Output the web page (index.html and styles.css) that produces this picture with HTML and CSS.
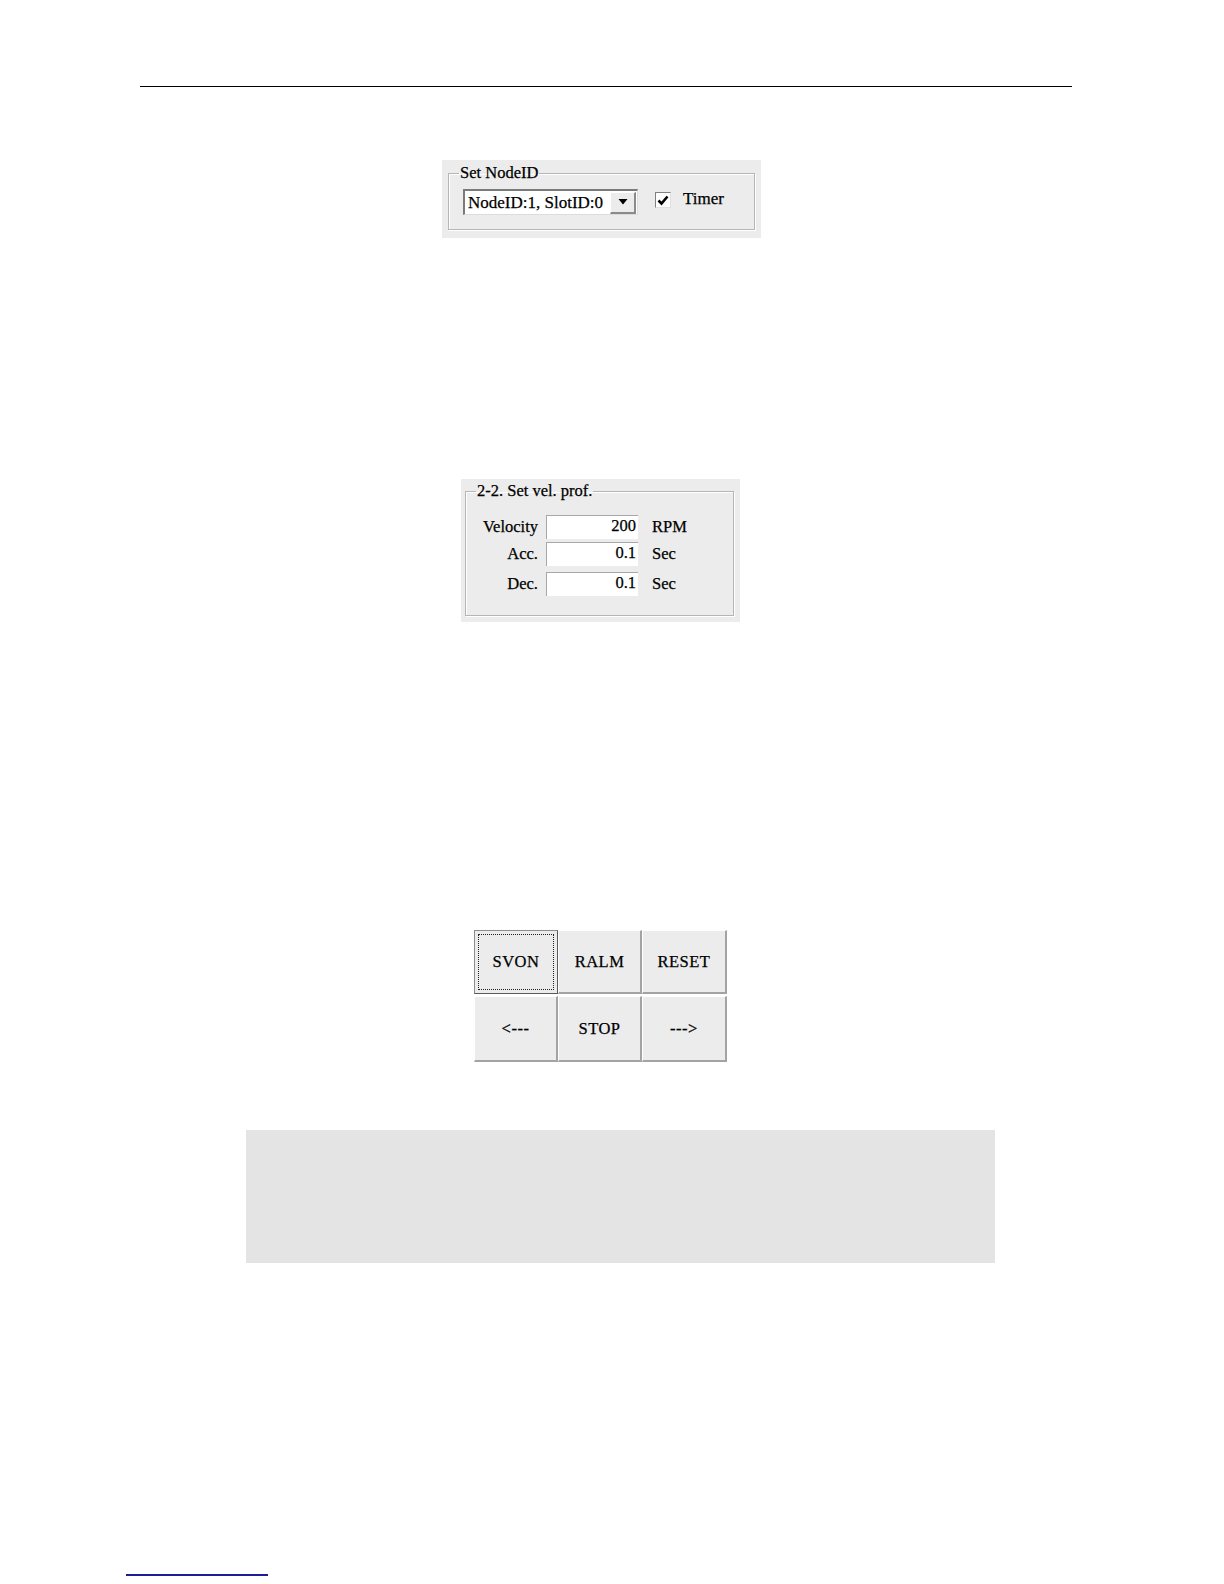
FILE: index.html
```html
<!DOCTYPE html>
<html>
<head>
<meta charset="utf-8">
<link rel="stylesheet" href="styles.css">
</head>
<body>
<div class="page">
  <div class="header-rule"></div>

  <div class="panel panel-node">
    <fieldset class="group group-node">
      <legend>Set NodeID</legend>
      <div class="node-row">
        <div class="combo">
          <span class="combo-text">NodeID:1, SlotID:0</span>
          <span class="combo-btn"><svg width="10" height="6" viewBox="0 0 10 6"><path d="M0.5 0 H9.5 L5 5.5 Z" fill="#000"/></svg></span>
        </div>
        <span class="check"><svg width="12" height="11" viewBox="0 0 12 11"><path d="M1.5 5.5 L4.5 8.5 L10.5 1.5" fill="none" stroke="#000" stroke-width="2.6"/></svg></span>
        <span class="check-label">Timer</span>
      </div>
    </fieldset>
  </div>

  <div class="panel panel-vel">
    <fieldset class="group group-vel">
      <legend>2-2. Set vel. prof.</legend>
      <div class="vel-grid">
        <span class="lbl">Velocity</span><span class="field">200</span><span class="unit">RPM</span>
        <span class="lbl">Acc.</span><span class="field">0.1</span><span class="unit">Sec</span>
        <span class="lbl lbl-dec">Dec.</span><span class="field field-dec">0.1</span><span class="unit unit-dec">Sec</span>
      </div>
    </fieldset>
  </div>

  <div class="btn-grid">
    <div class="btn btn-focus"><span class="focus-ring">SVON</span></div>
    <div class="btn">RALM</div>
    <div class="btn">RESET</div>
    <div class="btn">&lt;---</div>
    <div class="btn">STOP</div>
    <div class="btn">---&gt;</div>
  </div>

  <div class="gray-box"></div>

  <div class="footer-rule"></div>
</div>
</body>
</html>
```

FILE: styles.css
```css
html, body {
  margin: 0;
  padding: 0;
  background: #ffffff;
}
body {
  font-family: "Liberation Serif", "Times New Roman", serif;
  color: #000;
}
.page {
  width: 1224px;
  height: 1584px;
  overflow: hidden;
  display: flex;
  flex-direction: column;
}
.header-rule {
  margin-left: 140px;
  width: 932px;
  height: 86px;
  border-bottom: 1px solid #000;
  flex: none;
}

.panel {
  background: #ececec;
  box-sizing: border-box;
  flex: none;
  -webkit-text-stroke: 0.25px #000;
}
.group {
  margin: 0;
  padding: 0;
  border: 1px solid #b5b5b5;
  box-shadow: 1px 1px 0 #ffffff, inset 1px 1px 0 #ffffff;
  box-sizing: border-box;
}
.group legend {
  font-size: 16.5px;
  line-height: 18px;
  padding: 0 1px;
  margin-left: 10px;
}

/* Panel 1 */
.panel-node {
  margin-top: 73px;
  margin-left: 442px;
  width: 319px;
  height: 78px;
  padding: 4px 6px 0 6px;
}
.group-node {
  height: 66px;
}
.node-row {
  display: flex;
  align-items: center;
  padding: 7px 0 0 14px;
}
.combo {
  width: 175px;
  height: 26px;
  box-sizing: border-box;
  background: #fff;
  border-top: 2px solid #7a7a7a;
  border-left: 2px solid #7a7a7a;
  border-right: 1px solid #dcdcdc;
  border-bottom: 1px solid #dcdcdc;
  display: flex;
  align-items: center;
  justify-content: space-between;
}
.combo-text {
  font-size: 17px;
  line-height: 20px;
  padding-left: 3px;
  white-space: nowrap;
}
.combo-btn {
  width: 26px;
  height: 22px;
  box-sizing: border-box;
  background: #ececec;
  border-top: 1px solid #ffffff;
  border-left: 1px solid #ffffff;
  border-right: 2px solid #8a8a8a;
  border-bottom: 2px solid #8a8a8a;
  display: flex;
  align-items: center;
  justify-content: center;
  margin-right: 1px;
  -webkit-text-stroke: 0;
}
.check {
  margin-left: 17px;
  width: 16px;
  height: 16px;
  box-sizing: border-box;
  background: #fff;
  border-top: 1px solid #808080;
  border-left: 1px solid #808080;
  border-right: 1px solid #e0e0e0;
  border-bottom: 1px solid #e0e0e0;
  display: flex;
  align-items: center;
  justify-content: center;
  margin-top: -4px;
  -webkit-text-stroke: 0;
}
.check-label {
  margin-left: 12px;
  font-size: 17px;
  margin-top: -6px;
}

/* Panel 2 */
.panel-vel {
  margin-top: 241px;
  margin-left: 461px;
  width: 279px;
  height: 143px;
  padding: 3px 6px 0 4px;
}
.group-vel {
  height: 134px;
  padding: 15px 0 0 0;
}
.vel-grid {
  display: grid;
  grid-template-columns: 72px 92px auto;
  column-gap: 8px;
  row-gap: 3px;
  align-items: center;
}
.lbl {
  text-align: right;
  font-size: 16.5px;
  white-space: nowrap;
}
.field {
  height: 24px;
  box-sizing: border-box;
  background: #fff;
  border-top: 1px solid #a8a8a8;
  border-left: 1px solid #a8a8a8;
  text-align: right;
  font-size: 16.5px;
  line-height: 19px;
  padding-right: 2px;
}
.unit {
  font-size: 16.5px;
  padding-left: 6px;
}
.field-dec, .lbl-dec, .unit-dec {
  margin-top: 3px;
}

/* Buttons */
.btn-grid {
  margin-top: 308px;
  margin-left: 474px;
  width: 253px;
  display: grid;
  grid-template-columns: 84px 84px 85px;
  grid-template-rows: 64px 66px;
  row-gap: 2px;
  flex: none;
  -webkit-text-stroke: 0.25px #000;
}
.btn {
  box-sizing: border-box;
  background: #ececec;
  border-top: 1px solid #ffffff;
  border-left: 1px solid #ffffff;
  border-right: 2px solid #a3a3a3;
  border-bottom: 2px solid #a3a3a3;
  display: flex;
  align-items: center;
  justify-content: center;
  font-size: 16.5px;
  letter-spacing: 0.5px;
}
.btn-focus {
  border-top: 1px solid #8c8c8c;
  border-left: 1px solid #8c8c8c;
  border-right: 1px solid #5a5a5a;
  border-bottom: 1px solid #5a5a5a;
  padding: 3px;
}
.focus-ring {
  width: 100%;
  height: 100%;
  box-sizing: border-box;
  border: 1px dotted #202020;
  display: flex;
  align-items: center;
  justify-content: center;
}

/* Gray box */
.gray-box {
  margin-top: 68px;
  margin-left: 246px;
  width: 749px;
  height: 133px;
  background: #e4e4e4;
  flex: none;
}

/* Footer */
.footer-rule {
  margin-top: 311px;
  margin-left: 126px;
  width: 142px;
  height: 2px;
  background: #1c1c9a;
  flex: none;
}
```
